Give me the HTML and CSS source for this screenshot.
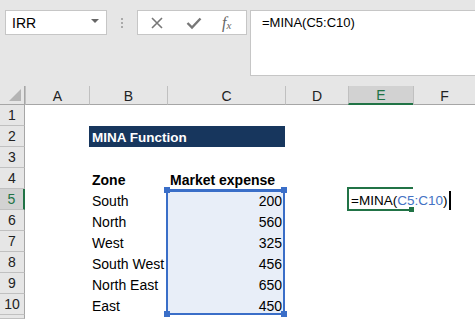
FILE: index.html
```html
<html>
<head>
<title>MINA Function</title>
<link rel="stylesheet" href="styles.css">
</head>
<body>

<div class="toolbar">
  <div class="namebox">
    <span class="name">IRR</span>
    <span class="drop"></span>
  </div>
  <div class="grip"><i></i><i></i><i></i></div>
  <div class="fxbox">
    <svg class="btn" width="14" height="14" viewBox="0 0 14 14"><path d="M2 2 L12 12 M12 2 L2 12" stroke="#777" stroke-width="1.6" fill="none"/></svg>
    <svg class="btn" width="16" height="14" viewBox="0 0 16 14"><path d="M1.5 7 L6 11.5 L14.5 2.5" stroke="#777" stroke-width="2.4" fill="none"/></svg>
    <span class="fx">f<sub>x</sub></span>
  </div>
  <div class="formula">=MINA(C5:C10)</div>
</div>

<div class="sheet">
  <div class="hdr corner"><span class="tri"></span></div>
  <div class="hdr col">A</div>
  <div class="hdr col">B</div>
  <div class="hdr col">C</div>
  <div class="hdr col">D</div>
  <div class="hdr col on">E</div>
  <div class="hdr col">F</div>

  <div class="hdr row">1</div>
  <div class="cell"></div><div class="cell"></div><div class="cell"></div><div class="cell"></div><div class="cell"></div><div class="cell"></div>

  <div class="hdr row">2</div>
  <div class="cell"></div>
  <div class="cell title">MINA Function</div>
  <div class="cell"></div><div class="cell"></div><div class="cell"></div>

  <div class="hdr row">3</div>
  <div class="cell"></div><div class="cell"></div><div class="cell"></div><div class="cell"></div><div class="cell"></div><div class="cell"></div>

  <div class="hdr row">4</div>
  <div class="cell"></div>
  <div class="cell bold">Zone</div>
  <div class="cell bold">Market expense</div>
  <div class="cell"></div><div class="cell"></div><div class="cell"></div>

  <div class="hdr row on">5</div>
  <div class="cell"></div>
  <div class="cell">South</div>
  <div class="cell num">200</div>
  <div class="cell"></div>
  <div class="cell active">=MINA(<span class="ref">C5:C10</span>)<span class="caret"></span></div>
  <div class="cell"></div>

  <div class="hdr row">6</div>
  <div class="cell"></div>
  <div class="cell">North</div>
  <div class="cell num">560</div>
  <div class="cell"></div><div class="cell"></div><div class="cell"></div>

  <div class="hdr row">7</div>
  <div class="cell"></div>
  <div class="cell">West</div>
  <div class="cell num">325</div>
  <div class="cell"></div><div class="cell"></div><div class="cell"></div>

  <div class="hdr row">8</div>
  <div class="cell"></div>
  <div class="cell">South West</div>
  <div class="cell num">456</div>
  <div class="cell"></div><div class="cell"></div><div class="cell"></div>

  <div class="hdr row">9</div>
  <div class="cell"></div>
  <div class="cell">North East</div>
  <div class="cell num">650</div>
  <div class="cell"></div><div class="cell"></div><div class="cell"></div>

  <div class="hdr row">10</div>
  <div class="cell"></div>
  <div class="cell">East</div>
  <div class="cell num">450</div>
  <div class="cell"></div><div class="cell"></div><div class="cell"></div>

  <div class="hdr row"></div>
  <div class="cell"></div><div class="cell"></div><div class="cell"></div><div class="cell"></div><div class="cell"></div><div class="cell"></div>

  <!-- range C5:C10 highlight -->
  <div class="range">
    <span class="h tl"></span><span class="h tr"></span><span class="h bl"></span><span class="h br"></span>
  </div>
</div>

</body>
</html>
```

FILE: styles.css
```css
body {
  margin: 0;
  width: 475px;
  height: 319px;
  overflow: hidden;
  background-color: #ffffff;
  font-family: "Liberation Sans", Arial, sans-serif;
  color: #000000;
}
div.toolbar {
  height: 86px;
  background-color: #e6e6e6;
  display: flex;
  align-items: flex-start;
  padding-top: 10px;
  padding-left: 5px;
  box-sizing: border-box;
}
div.namebox {
  width: 102px;
  height: 25px;
  box-sizing: border-box;
  border: 1px solid #c6c6c6;
  background-color: #ffffff;
  display: flex;
  align-items: center;
  justify-content: space-between;
  padding: 0 7px 0 6px;
  font-size: 14px;
}
span.drop {
  width: 0;
  height: 0;
  border-left: 4px solid transparent;
  border-right: 4px solid transparent;
  border-top: 4px solid #666666;
  margin-top: -4px;
}
div.grip {
  width: 30px;
  height: 25px;
  display: flex;
  flex-direction: column;
  align-items: center;
  justify-content: center;
  gap: 2px;
}
div.grip i {
  width: 2px;
  height: 2px;
  background-color: #aaaaaa;
}
div.fxbox {
  width: 110px;
  height: 25px;
  box-sizing: border-box;
  border: 1px solid #c6c6c6;
  background-color: #ffffff;
  display: flex;
  align-items: center;
  padding-left: 12px;
  gap: 22px;
}
span.fx {
  font-family: "Liberation Serif", serif;
  font-style: italic;
  font-size: 16px;
  color: #666666;
  margin-left: -2px;
}
span.fx sub {
  font-size: 11px;
  vertical-align: -1px;
}
div.formula {
  flex: 1;
  height: 66px;
  margin-left: 3px;
  margin-right: -2px;
  box-sizing: border-box;
  border: 1px solid #c6c6c6;
  background-color: #ffffff;
  padding: 4px 0 0 11px;
  font-size: 13px;
}
div.sheet {
  position: relative;
  display: grid;
  grid-template-columns: 25px 64px 78px 118px 63px 65px 62px;
  grid-template-rows: 19px repeat(10, 21px) 4px;
}
div.hdr {
  background-color: #e6e6e6;
  font-size: 14px;
  color: #222222;
  display: flex;
  align-items: center;
  justify-content: center;
  box-sizing: border-box;
}
div.col {
  border-bottom: 1px solid #a6a6a6;
  border-left: 1px solid #c0c0c0;
  padding-top: 1px;
}
div.col.on {
  background-color: #d2d2d2;
  border-bottom: 2px solid #217346;
  color: #217346;
}
div.row {
  border-right: 1px solid #a6a6a6;
  border-bottom: 1px solid #c0c0c0;
}
div.row.on {
  background-color: #d2d2d2;
  border-right: 2px solid #217346;
  color: #217346;
}
div.corner {
  border-bottom: 1px solid #a6a6a6;
  border-right: 1px solid #a6a6a6;
  justify-content: flex-end;
  align-items: flex-end;
  padding: 0 3px 3px 0;
}
span.tri {
  width: 0;
  height: 0;
  border-left: 12px solid transparent;
  border-bottom: 12px solid #b4b4b4;
}
div.cell {
  font-size: 14px;
  padding: 0 3px;
  display: flex;
  align-items: center;
  white-space: nowrap;
  overflow: visible;
  padding-top: 2px;
}
div.cell.title {
  grid-column: span 2;
  background-color: #17365d;
  color: #ffffff;
  font-weight: bold;
  font-size: 13.5px;
}
div.cell.bold {
  font-weight: bold;
}
div.cell.num {
  justify-content: flex-end;
  background-color: #e8eef8;
}
div.cell.active {
  position: relative;
  border: 2px solid #217346;
  border-right: none;
  margin: -2px 0 -1px -1px;
  padding-left: 2px;
  font-size: 13.5px;
  z-index: 2;
}
div.cell.active:after {
  content: "";
  position: absolute;
  right: -1px;
  bottom: -3px;
  width: 5px;
  height: 5px;
  background-color: #217346;
}
span.ref {
  color: #4472c4;
}
span.caret {
  flex-shrink: 0;
  width: 2px;
  height: 19px;
  background-color: #000000;
  margin-left: 2px;
}
div.range {
  position: absolute;
  left: 166px;
  top: 103px;
  width: 119px;
  height: 126px;
  box-sizing: border-box;
  border: 2px solid #3a6ec8;
  border-top-width: 3px;
  pointer-events: none;
}
span.h {
  position: absolute;
  width: 6px;
  height: 6px;
  background-color: #3a6ec8;
}
span.tl { left: -4px; top: -5px; }
span.tr { right: -4px; top: -5px; }
span.bl { left: -4px; bottom: -4px; }
span.br { right: -4px; bottom: -4px; }
```
